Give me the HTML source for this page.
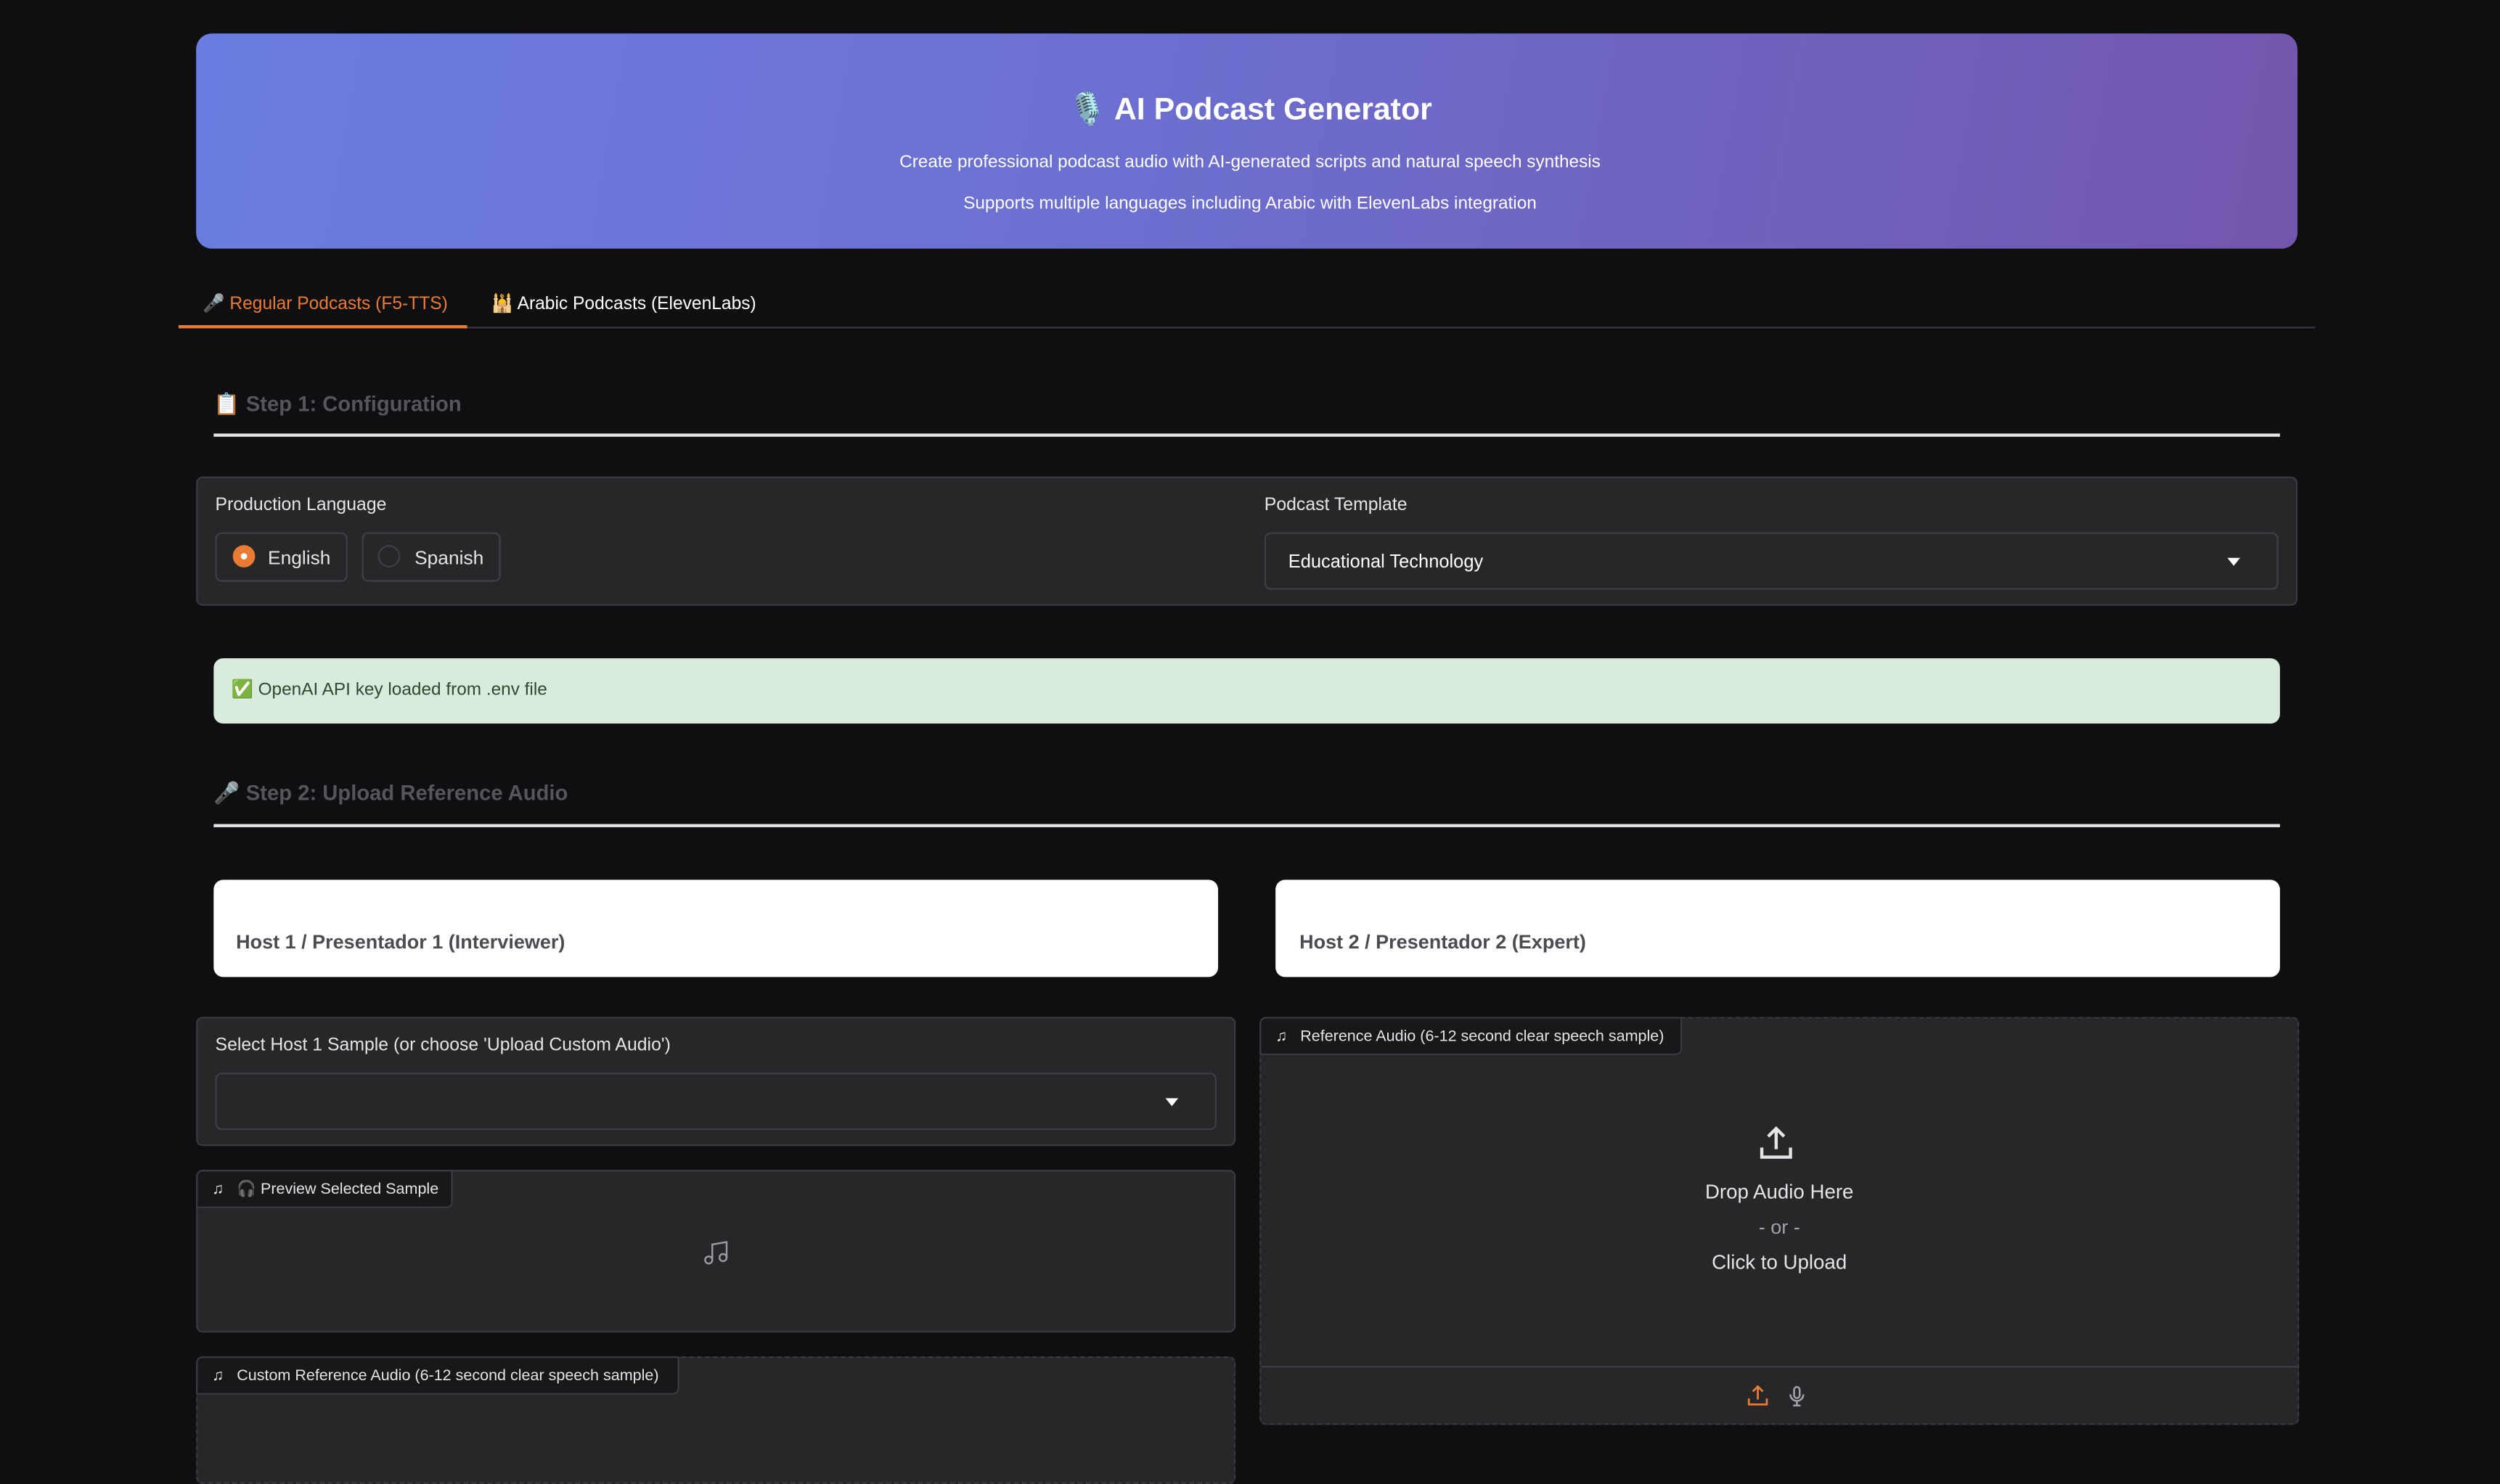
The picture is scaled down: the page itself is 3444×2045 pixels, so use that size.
<!DOCTYPE html>
<html><head><meta charset="utf-8">
<style>
html,body{margin:0;padding:0;background:#0f0f11;width:3444px;height:1990px;overflow:hidden}
#w{position:absolute;left:0;top:0;width:1568px;height:906px;transform:scale(2.19643);transform-origin:0 0;font-family:"Liberation Sans","Noto Sans CJK JP",sans-serif;color:#e4e4e7}
.a{position:absolute}
.t{position:absolute;white-space:nowrap;line-height:1}
.blk{position:absolute;background:#27272a;border:1px solid #3a3a3f;border-radius:4px;box-sizing:border-box}
.dash{border-style:dashed}
.tab{position:absolute;left:-1px;top:-1px;background:#18181b;border:1px solid #3a3a3f;border-radius:4px 0 4px 0;box-sizing:border-box;font-size:9.8px;color:#e4e4e7;display:flex;align-items:center}
.dd{position:absolute;background:#27272a;border:1px solid #3f3f46;border-radius:4px;box-sizing:border-box}
.arr{position:absolute;width:0;height:0;border-left:4px solid transparent;border-right:4px solid transparent;border-top:5px solid #fff}
</style></head><body><div id="w">
<div class="a" style="left:123px;top:21px;width:1318px;height:135px;border-radius:10px;background:linear-gradient(100deg,#6b7de0 0%,#6c6fd0 45%,#7256ad 100%)"></div>
<div class="t" style="left:0;width:1568px;text-align:center;top:60px;font-size:19.5px;font-weight:bold;color:#fff">🎙️ AI Podcast Generator</div>
<div class="t" style="left:0;width:1568px;text-align:center;top:97px;font-size:11.1px;color:#fff">Create professional podcast audio with AI-generated scripts and natural speech synthesis</div>
<div class="t" style="left:0;width:1568px;text-align:center;top:123px;font-size:11.1px;color:#fff">Supports multiple languages including Arabic with ElevenLabs integration</div>

<div class="a" style="left:112px;top:205px;width:1340px;height:1px;background:#3a3a3e"></div>
<div class="a" style="left:112px;top:204px;width:181px;height:2px;background:#ea7b35"></div>
<div class="t" style="left:127px;top:186px;font-size:11.2px;color:#ea7b35">🎤 Regular Podcasts (F5-TTS)</div>
<div class="t" style="left:308px;top:186px;font-size:11.2px;color:#fff">🕌 Arabic Podcasts (ElevenLabs)</div>

<div class="t" style="left:134px;top:247px;font-size:13.3px;font-weight:bold;color:#55555b">📋 Step 1: Configuration</div>
<div class="a" style="left:134px;top:272px;width:1296px;height:2px;background:#e4e4e7"></div>

<div class="blk" style="left:123px;top:299px;width:1318px;height:81px"></div>
<div class="t" style="left:135px;top:312px;font-size:11.3px">Production Language</div>
<div class="a" style="left:135px;top:334px;width:83px;height:31px;border:1px solid #3f3f46;border-radius:4px;box-sizing:border-box"></div>
<div class="a" style="left:146px;top:342px;width:14px;height:14px;border-radius:50%;background:#ea7b35"></div>
<div class="a" style="left:151px;top:347px;width:4px;height:4px;border-radius:50%;background:#fff"></div>
<div class="t" style="left:168px;top:344px;font-size:12px">English</div>
<div class="a" style="left:227px;top:334px;width:87px;height:31px;border:1px solid #3f3f46;border-radius:4px;box-sizing:border-box"></div>
<div class="a" style="left:237px;top:342px;width:14px;height:14px;border-radius:50%;border:1px solid #3f3f46;box-sizing:border-box"></div>
<div class="t" style="left:260px;top:344px;font-size:12px">Spanish</div>
<div class="t" style="left:793px;top:312px;font-size:11.3px">Podcast Template</div>
<div class="dd" style="left:793px;top:334px;width:636px;height:36px"></div>
<div class="t" style="left:808px;top:347px;font-size:11.6px;color:#fff">Educational Technology</div>
<div class="arr" style="left:1397px;top:350px"></div>

<div class="a" style="left:134px;top:413px;width:1296px;height:41px;background:#d9ebdc;border-radius:6px"></div>
<div class="t" style="left:145px;top:428px;font-size:11.1px;color:#2f4a2f">✅ OpenAI API key loaded from .env file</div>

<div class="t" style="left:134px;top:491px;font-size:13.3px;font-weight:bold;color:#55555b">🎤 Step 2: Upload Reference Audio</div>
<div class="a" style="left:134px;top:517px;width:1296px;height:2px;background:#e4e4e7"></div>

<div class="a" style="left:134px;top:552px;width:630px;height:61px;background:#fff;border-radius:6px"></div>
<div class="t" style="left:148px;top:585px;font-size:12.3px;font-weight:bold;color:#4b4b52">Host 1 / Presentador 1 (Interviewer)</div>
<div class="a" style="left:800px;top:552px;width:630px;height:61px;background:#fff;border-radius:6px"></div>
<div class="t" style="left:815px;top:585px;font-size:12.3px;font-weight:bold;color:#4b4b52">Host 2 / Presentador 2 (Expert)</div>

<div class="blk" style="left:123px;top:638px;width:652px;height:81px"></div>
<div class="t" style="left:135px;top:651px;font-size:11.3px">Select Host 1 Sample (or choose 'Upload Custom Audio')</div>
<div class="dd" style="left:135px;top:673px;width:628px;height:36px"></div>
<div class="arr" style="left:731px;top:689px"></div>

<div class="blk" style="left:123px;top:734px;width:652px;height:102px">
<div class="tab" style="width:161px;height:24px;padding-left:9px">♫&nbsp;&nbsp; 🎧 Preview Selected Sample</div></div>
<svg class="a" style="left:440px;top:777px" width="18" height="18" viewBox="0 0 24 24" fill="none" stroke="#9a9aa0" stroke-width="1.5"><path d="M9 18V5l12-2v13"/><circle cx="6" cy="18" r="3"/><circle cx="18" cy="16" r="3"/></svg>

<div class="blk dash" style="left:123px;top:851px;width:652px;height:80px">
<div class="tab" style="width:303px;height:24px;padding-left:9px">♫&nbsp;&nbsp; Custom Reference Audio (6-12 second clear speech sample)</div></div>

<div class="blk dash" style="left:790px;top:638px;width:652px;height:256px">
<div class="tab" style="width:265px;height:24px;padding-left:9px">♫&nbsp;&nbsp; Reference Audio (6-12 second clear speech sample)</div>
<div class="a" style="left:0;top:218px;width:650px;height:1px;background:#3f3f46"></div></div>
<svg class="a" style="left:1102px;top:705px" width="24" height="24" viewBox="0 0 24 24" fill="none" stroke="#e4e4e7" stroke-width="2"><path d="M12 3v13M7 8l5-5 5 5M3 15v6h18v-6"/></svg>
<div class="t" style="left:790px;width:652px;text-align:center;top:742px;font-size:12.6px">Drop Audio Here</div>
<div class="t" style="left:790px;width:652px;text-align:center;top:764px;font-size:12.3px;color:#a1a1aa">- or -</div>
<div class="t" style="left:790px;width:652px;text-align:center;top:786px;font-size:12.6px">Click to Upload</div>
<svg class="a" style="left:1095px;top:867px" width="15" height="17" viewBox="0 0 24 24" fill="none" stroke="#ea7b35" stroke-width="2"><path d="M12 3v13M7 8l5-5 5 5M3 15v6h18v-6"/></svg>
<svg class="a" style="left:1120px;top:867px" width="14" height="18" viewBox="0 0 24 24" fill="none" stroke="#a1a1aa" stroke-width="2"><rect x="9" y="2" width="6" height="12" rx="3"/><path d="M5 10a7 7 0 0 0 14 0M12 17v5M8 22h8"/></svg>
</div></body></html>
